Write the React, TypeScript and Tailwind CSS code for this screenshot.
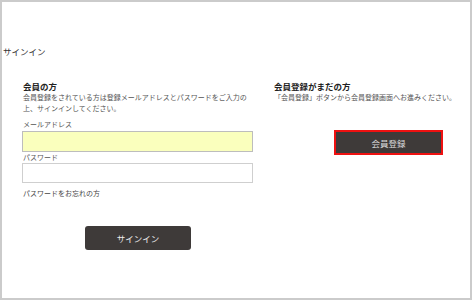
export default function App() {
  return (
    <div className="w-[472px] h-[300px] bg-white border-2 border-[#cbcbcb] font-['Noto_Sans_CJK_JP',sans-serif] text-[#333]">
      <h1 className="pt-[43px] pl-[1px] text-[8.5px] leading-[12px] font-normal">サインイン</h1>

      <div className="flex mt-[23px]">
        {/* members */}
        <div className="w-[231px] ml-[20px] flex flex-col">
          <h2 className="pl-[1px] text-[8.5px] leading-[12px] font-bold text-[#222]">会員の方</h2>
          <p className="pl-[1px] text-[7px] leading-[11px] text-[#555]">
            会員登録をされている方は登録メールアドレスとパスワードをご入力の
            <br />
            上、サインインしてください。
          </p>

          <label className="mt-[5px] pl-[1px] text-[7px] leading-[11px] text-[#555]">メールアドレス</label>
          <input
            type="email"
            className="mt-[1px] h-[21px] w-[231px] border border-[#bdbdbd] bg-[#faffbd] outline-none"
          />

          <label className="pl-[1px] text-[7px] leading-[10px] text-[#555]">パスワード</label>
          <input
            type="password"
            className="mt-[1px] h-[20px] w-[231px] border border-[#cfcfcf] bg-white outline-none"
          />

          <a className="mt-[5px] pl-[1px] text-[7px] leading-[11px] text-[#444]">パスワードをお忘れの方</a>

          <button className="mt-[27px] ml-[63px] w-[106px] h-[24px] rounded-[3px] bg-[#3e3a39] text-[#eeeeee] text-[8.5px] leading-[12px]">
            サインイン
          </button>
        </div>

        {/* guests */}
        <div className="ml-[20px] flex flex-col">
          <h2 className="pl-[1px] text-[8.5px] leading-[12px] font-bold text-[#222]">会員登録がまだの方</h2>
          <p className="pl-[1px] text-[7px] leading-[11px] text-[#555]">
            「会員登録」ボタンから会員登録画面へお進みください。
          </p>
          <button className="mt-[27px] ml-[61px] w-[109px] h-[25px] border-2 border-[#ee1111] bg-[#3e3a39] text-[#dddddd] text-[8.5px] leading-[12px]">
            会員登録
          </button>
        </div>
      </div>
    </div>
  );
}
